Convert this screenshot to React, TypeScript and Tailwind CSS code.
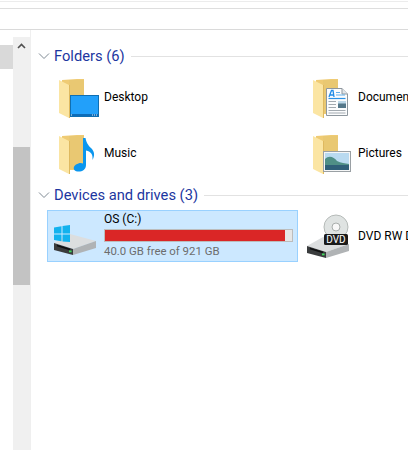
import React from "react";

const font = { fontFamily: 'Roboto, "Noto Sans", sans-serif' };

function FolderBase() {
  return (
    <>
      <path d="M3 3 L18 2 H25 V37 H3 Z" fill="#efcb74" />
      <path d="M10 3 H25 V36 H10 Z" fill="#e9c872" />
      <path d="M0 3 L10 8 V41 L0 36 Z" fill="#fbe5a3" />
      <path d="M10.5 8 V41" stroke="#dfb95f" strokeWidth="1" />
    </>
  );
}

function DesktopIcon() {
  return (
    <svg width="42" height="42" viewBox="0 0 42 42">
      <FolderBase />
      <rect x="11.5" y="18.5" width="28" height="21" fill="#22a0fa" stroke="#0f6fb3" />
      <rect x="12" y="37" width="27" height="2" fill="#0d6cb8" />
      <path d="M12 38 H14 M33 38 H39" stroke="#ffffff" strokeWidth="0.9" strokeDasharray="1 1" />
    </svg>
  );
}

function DocumentsIcon() {
  return (
    <svg width="42" height="42" viewBox="0 0 42 42">
      <FolderBase />
      <path d="M13.5 11.5 H29 L34.5 17 V38.5 H13.5 Z" fill="#fbfcfd" stroke="#8e979e" />
      <path d="M29 11.5 V17 H34.5" fill="#e2e6e9" stroke="#8e979e" />
      <path d="M16 20 L18.5 13.5 H20 L21 20 M17 18 H20.5" fill="none" stroke="#1e8be8" strokeWidth="1.3" />
      <path d="M23 15.5 H27 M23 18 H32" stroke="#63aee8" strokeWidth="1" />
      <path d="M15.5 21.5 H32.5" stroke="#2a93e6" strokeWidth="1.2" />
      <path d="M15.5 24.5 H23 M15.5 27.5 H23 M15.5 30.5 H23 M15.5 33.5 H32.5 M15.5 36 H32.5" stroke="#a3aab0" strokeWidth="1" />
      <rect x="25" y="24" width="8" height="7" fill="#55788a" />
      <rect x="25" y="24" width="8" height="2.5" fill="#bcd7e8" />
    </svg>
  );
}

function MusicIcon() {
  return (
    <svg width="42" height="42" viewBox="0 0 42 42">
      <FolderBase />
      <path d="M24 5 H26.5 C27.5 10 29 12 32 15 C35.5 18.5 36 22 33.5 27 C34 22 32.5 18.5 27 17.5 V32 C27 37 22.5 39 18.5 38.5 C14 38 13.5 34 17 31.5 C19.5 30 22 29.5 24 30.5 Z" fill="#0a96ee" />
    </svg>
  );
}

function PicturesIcon() {
  return (
    <svg width="42" height="42" viewBox="0 0 42 42">
      <FolderBase />
      <rect x="10.5" y="18.5" width="27" height="20" fill="#f5f6f6" stroke="#9aa0a4" />
      <rect x="12" y="20" width="24" height="17" fill="#b9daf0" />
      <path d="M12 26 C16 22 21 24 24 28 C28 30 32 30 36 31 V37 H12 Z" fill="#4f8f86" />
      <path d="M12 32 H36 V37 H12 Z" fill="#2f5f78" />
    </svg>
  );
}

// drawn from the top left of the windows logo / disc area, drive sits at y 9-30
function DriveBody() {
  return (
    <>
      <path d="M0 18 L16 9 L42 16 L19 24 Z" fill="#dcdedf" />
      <path d="M19 24 L42 16 V23 L19 30 Z" fill="#b0b3b5" />
      <path d="M0 18 L19 24 V30 L0 25 Z" fill="#3a3c3d" />
      <path d="M3 20.5 L16 24.5" stroke="#0e0f10" strokeWidth="1.5" />
      <rect x="15" y="25.5" width="2.6" height="1.8" fill="#3fdc5c" />
    </>
  );
}

function OsDriveIcon() {
  return (
    <svg width="44" height="32" viewBox="0 0 44 32">
      <DriveBody />
      <path d="M0 2.5 L7.5 1.2 V8.4 H0 Z M8.5 1 L16 0 V8.4 H8.5 Z M0 9.4 H7.5 V16.3 L0 15 Z M8.5 9.4 H16 V17 L8.5 16.4 Z" fill="#12b2ee" />
    </svg>
  );
}

function DvdIcon() {
  return (
    <svg width="44" height="46" viewBox="0 0 44 46">
      <circle cx="29" cy="14" r="12" fill="#dfe3e2" stroke="#b5bab8" />
      <circle cx="29" cy="14" r="4" fill="#f8f8f8" stroke="#a9aeac" />
      <g transform="translate(0 15)">
        <DriveBody />
      </g>
      <rect x="17" y="21" width="24" height="11" rx="1.5" fill="#1b1b1b" />
      <text x="29" y="30" textAnchor="middle" fontSize="10" fill="#ffffff" style={font}>DVD</text>
    </svg>
  );
}

function Chevron() {
  return (
    <svg width="12" height="8" viewBox="0 0 12 8" className="shrink-0">
      <path d="M1 1.5 L6 6.5 L11 1.5" fill="none" stroke="#7f8a94" strokeWidth="1" />
    </svg>
  );
}

function GroupHeader({ label }: { label: string }) {
  return (
    <div className="flex h-5 items-center">
      <Chevron />
      <span className="ml-[4px] whitespace-nowrap text-[14.7px] leading-5 text-[#1c36a0]">{label}</span>
      <div className="ml-[6px] h-px flex-1 bg-[#e2e2e2]" />
    </div>
  );
}

function FolderItem({ icon, label }: { icon: React.ReactNode; label: string }) {
  return (
    <div className="flex h-[42px] w-[254px] shrink-0 items-center pl-[21px]">
      <div className="h-[42px] w-[45px] shrink-0">{icon}</div>
      <span className="whitespace-nowrap pb-[2px] text-[12px] leading-4 text-black">{label}</span>
    </div>
  );
}

export default function App() {
  return (
    <div className="flex h-[450px] w-[408px] flex-col overflow-hidden bg-white" style={font}>
      {/* toolbar lines */}
      <div className="h-[2px] shrink-0 border-b border-[#ececec]" />
      <div className="h-[7px] shrink-0 border-b border-[#dedede]" />
      <div className="h-[21px] shrink-0 border-b border-[#dadada]" />

      <div className="flex flex-1">
        {/* nav pane */}
        <div className="flex w-[13px] shrink-0 flex-col pt-[15px]">
          <div className="h-[24px] bg-[#d9d9d9]" />
        </div>
        <div className="mt-[7px] flex w-[17px] shrink-0 flex-col bg-[#f0f0f0]">
          <div className="flex h-[17px] items-center justify-center">
            <svg width="9" height="6" viewBox="0 0 9 6">
              <path d="M1 5 L4.5 1.5 L8 5" fill="none" stroke="#505050" strokeWidth="1.6" />
            </svg>
          </div>
          <div className="mt-[93px] h-[138px] bg-[#c3c3c3]" />
        </div>

        {/* content pane */}
        <div className="min-w-0 flex-1 border-l border-[#efefef] pl-[7px]">
          <div className="mt-[16px]">
            <GroupHeader label="Folders (6)" />
          </div>
          <div className="mt-[11px] flex">
            <FolderItem icon={<DesktopIcon />} label="Desktop" />
            <FolderItem icon={<DocumentsIcon />} label="Documents" />
          </div>
          <div className="mt-[14px] flex">
            <FolderItem icon={<MusicIcon />} label="Music" />
            <FolderItem icon={<PicturesIcon />} label="Pictures" />
          </div>
          <div className="mt-[10px]">
            <GroupHeader label="Devices and drives (3)" />
          </div>
          <div className="ml-[9px] mt-[5px] flex">
            <div className="flex h-[52px] w-[251px] shrink-0 border border-[#99d1ff] bg-[#cce8ff] pl-[6px] pr-[4px]">
              <div className="h-[50px] w-[50px] shrink-0 pt-[14px]">
                <OsDriveIcon />
              </div>
              <div className="flex flex-1 flex-col pt-[1px]">
                <span className="whitespace-nowrap text-[12px] leading-[15px] text-black">OS (C:)</span>
                <div className="mt-[2px] h-[13px] border border-[#bcbcbc] bg-[#e6e6e6]">
                  <div className="h-full w-[96%] bg-[#da2626]" />
                </div>
                <span className="mt-[1px] whitespace-nowrap text-[11.4px] leading-[16px] text-[#6d6d6d]">40.0 GB free of 921 GB</span>
              </div>
            </div>
            <div className="ml-[9px] flex h-[52px] shrink-0 items-center">
              <div className="h-[46px] w-[51px] shrink-0">
                <DvdIcon />
              </div>
              <span className="whitespace-nowrap text-[12px] leading-4 text-black">DVD RW Drive (D:)</span>
            </div>
          </div>
        </div>
      </div>
    </div>
  );
}
